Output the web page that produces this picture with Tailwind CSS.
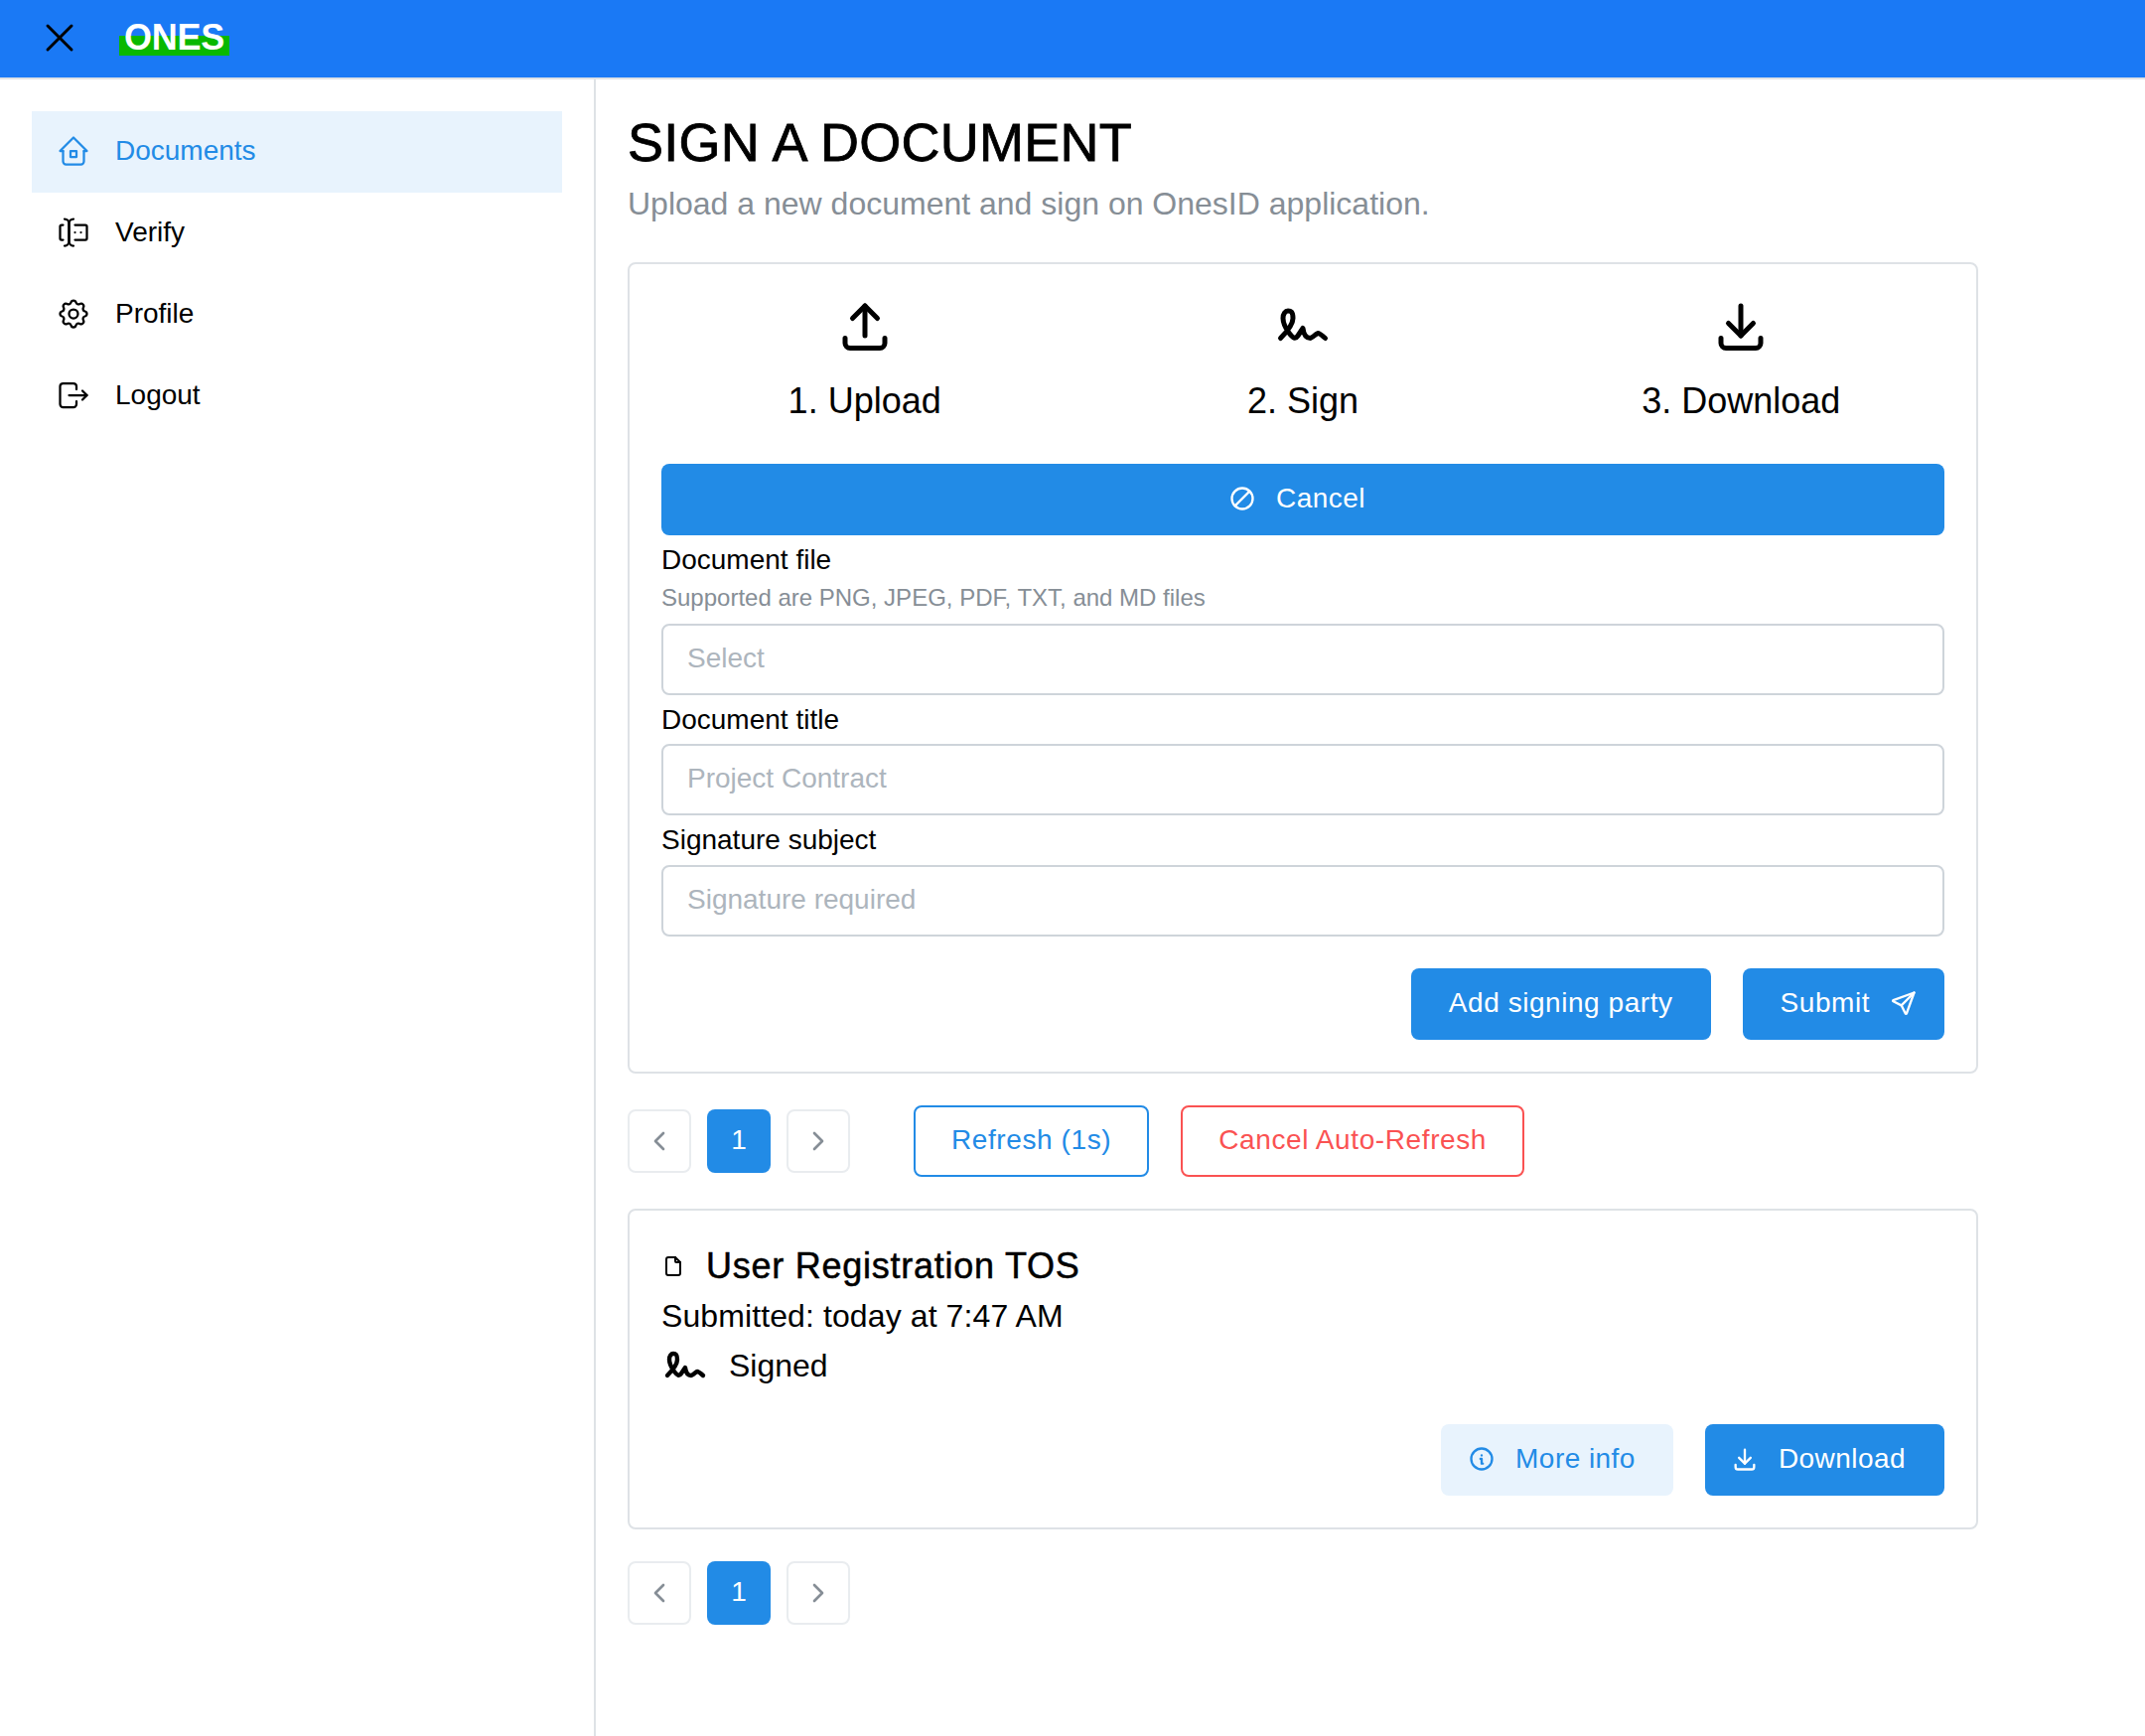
<!DOCTYPE html>
<html lang="en">

<head>
    <meta charset="UTF-8">
    <meta name="viewport" content="width=device-width, initial-scale=1.0">
    <title>Sign a document</title>
    <script src="https://cdn.jsdelivr.net/npm/@tailwindcss/browser@4"></script>
</head>

<body class="bg-white text-black text-[28px] font-['Liberation_Sans',Arial,sans-serif]">

    <!-- header -->
    <header class="h-[80px] bg-[#1a79f5] border-b-2 border-[#dee2e6] flex items-center pl-[36px] pb-[2px]">
        <svg class="w-[48px] h-[48px]" viewBox="0 0 24 24" fill="none" stroke="#000" stroke-width="1.5" stroke-linecap="round" stroke-linejoin="round">
            <path d="M18 6l-12 12" />
            <path d="M6 6l12 12" />
        </svg>
        <div class="relative ml-[36px] w-[111px] h-[52px] flex justify-center">
            <span class="absolute left-0 right-0 top-[24px] h-[20px] bg-[#09b800]"></span>
            <span class="relative text-white font-bold text-[36px] leading-[52px] tracking-[-0.2px]">ONES</span>
        </div>
    </header>

    <div class="flex min-h-[1668px]">

        <!-- sidebar -->
        <nav class="w-[600px] shrink-0 border-r-2 border-[#dee2e6] pt-[32px] px-[32px]">
            <a href="#" class="h-[82px] flex items-center gap-[24px] pl-[24px] pb-[2px] bg-[#e8f3fd] text-[#228be6]">
                <svg class="w-[36px] h-[36px]" viewBox="0 0 24 24" fill="none" stroke="currentColor" stroke-width="1.5" stroke-linecap="round" stroke-linejoin="round">
                    <path d="M5 12l-2 0l9 -9l9 9l-2 0" />
                    <path d="M5 12v7a2 2 0 0 0 2 2h10a2 2 0 0 0 2 -2v-7" />
                    <path d="M10 12h4v4h-4z" />
                </svg>
                Documents
            </a>
            <a href="#" class="h-[82px] flex items-center gap-[24px] pl-[24px] pb-[2px]">
                <svg class="w-[36px] h-[36px]" viewBox="0 0 24 24" fill="none" stroke="currentColor" stroke-width="1.5" stroke-linecap="round" stroke-linejoin="round">
                    <path d="M12 3a3 3 0 0 0 -3 3v12a3 3 0 0 0 3 3" />
                    <path d="M6 3a3 3 0 0 1 3 3v12a3 3 0 0 1 -3 3" />
                    <path d="M13 7h7a1 1 0 0 1 1 1v8a1 1 0 0 1 -1 1h-7" />
                    <path d="M5 7h-1a1 1 0 0 0 -1 1v8a1 1 0 0 0 1 1h1" />
                    <path d="M17 12h.01" />
                    <path d="M13 12h.01" />
                </svg>
                Verify
            </a>
            <a href="#" class="h-[82px] flex items-center gap-[24px] pl-[24px] pb-[2px]">
                <svg class="w-[36px] h-[36px]" viewBox="0 0 24 24" fill="none" stroke="currentColor" stroke-width="1.5" stroke-linecap="round" stroke-linejoin="round">
                    <path d="M10.325 4.317c.426 -1.756 2.924 -1.756 3.35 0a1.724 1.724 0 0 0 2.573 1.066c1.543 -.94 3.31 .826 2.37 2.37a1.724 1.724 0 0 0 1.065 2.572c1.756 .426 1.756 2.924 0 3.35a1.724 1.724 0 0 0 -1.066 2.573c.94 1.543 -.826 3.31 -2.37 2.37a1.724 1.724 0 0 0 -2.572 1.065c-.426 1.756 -2.924 1.756 -3.35 0a1.724 1.724 0 0 0 -2.573 -1.066c-1.543 .94 -3.31 -.826 -2.37 -2.37a1.724 1.724 0 0 0 -1.065 -2.572c-1.756 -.426 -1.756 -2.924 0 -3.35a1.724 1.724 0 0 0 1.066 -2.573c-.94 -1.543 .826 -3.31 2.37 -2.37c1 .608 2.296 .07 2.572 -1.065z" />
                    <path d="M9 12a3 3 0 1 0 6 0a3 3 0 0 0 -6 0" />
                </svg>
                Profile
            </a>
            <a href="#" class="h-[82px] flex items-center gap-[24px] pl-[24px] pb-[2px]">
                <svg class="w-[36px] h-[36px]" viewBox="0 0 24 24" fill="none" stroke="currentColor" stroke-width="1.5" stroke-linecap="round" stroke-linejoin="round">
                    <path d="M14 8v-2a2 2 0 0 0 -2 -2h-7a2 2 0 0 0 -2 2v12a2 2 0 0 0 2 2h7a2 2 0 0 0 2 -2v-2" />
                    <path d="M9 12h12l-3 -3" />
                    <path d="M18 15l3 -3" />
                </svg>
                Logout
            </a>
        </nav>

        <!-- main -->
        <main class="w-[1392px] pl-[32px] pt-[34px]">
            <h1 class="text-[54px] leading-[58px] tracking-[0.27px] [-webkit-text-stroke:0.8px_black]">SIGN A DOCUMENT</h1>
            <p class="text-[#868e96] text-[32px] leading-[38px] mt-[14px]">Upload a new document and sign on OnesID application.</p>

            <!-- sign form -->
            <section class="mt-[40px] border-2 border-[#dee2e6] rounded-[8px] px-[32px] pt-[32px] pb-[32px] h-[817px]">
                <div class="grid grid-cols-3 -mx-[16px] text-center text-[36px] leading-[44px]">
                    <div class="flex flex-col items-center gap-[24px]">
                        <svg class="w-[60px] h-[60px]" viewBox="0 0 24 24" fill="none" stroke="#000" stroke-width="2" stroke-linecap="round" stroke-linejoin="round">
                            <path d="M4 17v2a2 2 0 0 0 2 2h12a2 2 0 0 0 2 -2v-2" />
                            <path d="M7 9l5 -5l5 5" />
                            <path d="M12 4l0 12" />
                        </svg>
                        1. Upload
                    </div>
                    <div class="flex flex-col items-center gap-[24px]">
                        <svg class="w-[60px] h-[60px]" viewBox="0 0 24 24" fill="none" stroke="#000" stroke-width="2" stroke-linecap="round" stroke-linejoin="round">
                            <path d="M3 17c3.333 -3.333 5 -6 5 -8c0 -3 -1 -3 -2 -3s-2.032 1.085 -2 3c.034 2.048 1.658 4.877 2.5 6c1.5 2 2.5 2.5 3.5 1l2 -3c.333 2.667 1.333 4 3 4c.53 0 2.639 -2 3 -2c.517 0 1.517 .667 3 2" />
                        </svg>
                        2. Sign
                    </div>
                    <div class="flex flex-col items-center gap-[24px]">
                        <svg class="w-[60px] h-[60px]" viewBox="0 0 24 24" fill="none" stroke="#000" stroke-width="2" stroke-linecap="round" stroke-linejoin="round">
                            <path d="M4 17v2a2 2 0 0 0 2 2h12a2 2 0 0 0 2 -2v-2" />
                            <path d="M7 11l5 5l5 -5" />
                            <path d="M12 4l0 12" />
                        </svg>
                        3. Download
                    </div>
                </div>

                <button class="mt-[41px] w-full h-[72px] pb-[2px] rounded-[8px] bg-[#228be6] text-white tracking-[0.5px] flex items-center justify-center gap-[20px] pr-[12px]">
                    <svg class="w-[28px] h-[28px]" viewBox="0 0 24 24" fill="none" stroke="currentColor" stroke-width="2" stroke-linecap="round" stroke-linejoin="round">
                        <path d="M3 12a9 9 0 1 0 18 0a9 9 0 1 0 -18 0" />
                        <path d="M5.7 18.3l12.6 -12.6" />
                    </svg>
                    Cancel
                </button>

                <label class="block leading-[48px] mt-[1px]">Document file</label>
                <p class="text-[#868e96] text-[24px] leading-[28px] mb-[12px]">Supported are PNG, JPEG, PDF, TXT, and MD files</p>
                <input class="block w-full h-[72px] pb-[2px] border-2 border-[#ced4da] rounded-[8px] px-[24px] placeholder:text-[#adb5bd]" placeholder="Select">

                <label class="block leading-[49px]">Document title</label>
                <input class="block w-full h-[72px] pb-[2px] border-2 border-[#ced4da] rounded-[8px] px-[24px] placeholder:text-[#adb5bd]" placeholder="Project Contract">

                <label class="block leading-[50px]">Signature subject</label>
                <input class="block w-full h-[72px] pb-[2px] border-2 border-[#ced4da] rounded-[8px] px-[24px] placeholder:text-[#adb5bd]" placeholder="Signature required">

                <div class="flex justify-end gap-[32px] mt-[32px] tracking-[0.55px]">
                    <button class="h-[72px] pb-[2px] px-[38px] rounded-[8px] bg-[#228be6] text-white">Add signing party</button>
                    <button class="h-[72px] pb-[2px] pl-[38px] pr-[27px] rounded-[8px] bg-[#228be6] text-white flex items-center gap-[20px]">
                        Submit
                        <svg class="w-[28px] h-[28px]" viewBox="0 0 24 24" fill="none" stroke="currentColor" stroke-width="2" stroke-linecap="round" stroke-linejoin="round">
                            <path d="M10 14l11 -11" />
                            <path d="M21 3l-6.5 18a.55 .55 0 0 1 -1 0l-3.5 -7l-7 -3.5a.55 .55 0 0 1 0 -1l18 -6.5" />
                        </svg>
                    </button>
                </div>
            </section>

            <!-- pager and refresh -->
            <div class="mt-[32px] flex items-center gap-[64px]">
                <div class="flex gap-[16px]">
                    <button class="w-[64px] h-[64px] border-2 border-[#e9ecef] rounded-[8px] flex items-center justify-center">
                        <svg class="w-[32px] h-[32px]" viewBox="0 0 24 24" fill="none" stroke="#868e96" stroke-width="2" stroke-linecap="round" stroke-linejoin="round">
                            <path d="M15 6l-6 6l6 6" />
                        </svg>
                    </button>
                    <button class="w-[64px] h-[64px] pb-[2px] rounded-[8px] bg-[#228be6] text-white">1</button>
                    <button class="w-[64px] h-[64px] border-2 border-[#e9ecef] rounded-[8px] flex items-center justify-center">
                        <svg class="w-[32px] h-[32px]" viewBox="0 0 24 24" fill="none" stroke="#868e96" stroke-width="2" stroke-linecap="round" stroke-linejoin="round">
                            <path d="M9 6l6 6l-6 6" />
                        </svg>
                    </button>
                </div>
                <div class="flex gap-[32px] tracking-[0.6px]">
                    <button class="h-[72px] pb-[2px] px-[36px] border-2 border-[#228be6] rounded-[8px] text-[#228be6]">Refresh (1s)</button>
                    <button class="h-[72px] pb-[2px] px-[36px] border-2 border-[#fa5252] rounded-[8px] text-[#fa5252]">Cancel Auto-Refresh</button>
                </div>
            </div>

            <!-- document card -->
            <section class="mt-[32px] border-2 border-[#dee2e6] rounded-[8px] px-[32px] pt-[34px] h-[323px]">
                <div class="flex items-center gap-[21px] h-[44px] text-[36px] tracking-[0.75px] [-webkit-text-stroke:0.5px_black]">
                    <svg class="w-[24px] h-[24px]" viewBox="0 0 24 24" fill="none" stroke="#000" stroke-width="2" stroke-linecap="round" stroke-linejoin="round">
                        <path d="M14 3v4a1 1 0 0 0 1 1h4" />
                        <path d="M17 21h-10a2 2 0 0 1 -2 -2v-14a2 2 0 0 1 2 -2h7l5 5v11a2 2 0 0 1 -2 2z" />
                    </svg>
                    User Registration TOS
                </div>
                <p class="text-[32px] leading-[40px] mt-[8px] tracking-[0.1px]">Submitted: today at 7:47 AM</p>
                <div class="flex items-center gap-[20px] text-[32px] h-[44px] mt-[8px]">
                    <svg class="w-[48px] h-[48px]" viewBox="0 0 24 24" fill="none" stroke="#000" stroke-width="2.2" stroke-linecap="round" stroke-linejoin="round">
                        <path d="M3 17c3.333 -3.333 5 -6 5 -8c0 -3 -1 -3 -2 -3s-2.032 1.085 -2 3c.034 2.048 1.658 4.877 2.5 6c1.5 2 2.5 2.5 3.5 1l2 -3c.333 2.667 1.333 4 3 4c.53 0 2.639 -2 3 -2c.517 0 1.517 .667 3 2" />
                    </svg>
                    Signed
                </div>
                <div class="flex justify-end gap-[32px] mt-[37px] tracking-[0.45px]">
                    <button class="h-[72px] pb-[2px] pl-[27px] pr-[38px] rounded-[8px] bg-[#e8f3fd] text-[#228be6] flex items-center gap-[20px]">
                        <svg class="w-[28px] h-[28px]" viewBox="0 0 24 24" fill="none" stroke="currentColor" stroke-width="2" stroke-linecap="round" stroke-linejoin="round">
                            <path d="M3 12a9 9 0 1 0 18 0a9 9 0 0 0 -18 0" />
                            <path d="M12 9h.01" />
                            <path d="M11 12h1v4h1" />
                        </svg>
                        More info
                    </button>
                    <button class="h-[72px] pb-[2px] pl-[26px] pr-[39px] rounded-[8px] bg-[#228be6] text-white flex items-center gap-[20px]">
                        <svg class="w-[28px] h-[28px]" viewBox="0 0 24 24" fill="none" stroke="currentColor" stroke-width="2" stroke-linecap="round" stroke-linejoin="round">
                            <path d="M4 17v2a2 2 0 0 0 2 2h12a2 2 0 0 0 2 -2v-2" />
                            <path d="M7 11l5 5l5 -5" />
                            <path d="M12 4l0 12" />
                        </svg>
                        Download
                    </button>
                </div>
            </section>

            <!-- bottom pager -->
            <div class="mt-[32px] flex gap-[16px]">
                <button class="w-[64px] h-[64px] border-2 border-[#e9ecef] rounded-[8px] flex items-center justify-center">
                    <svg class="w-[32px] h-[32px]" viewBox="0 0 24 24" fill="none" stroke="#868e96" stroke-width="2" stroke-linecap="round" stroke-linejoin="round">
                        <path d="M15 6l-6 6l6 6" />
                    </svg>
                </button>
                <button class="w-[64px] h-[64px] pb-[2px] rounded-[8px] bg-[#228be6] text-white">1</button>
                <button class="w-[64px] h-[64px] border-2 border-[#e9ecef] rounded-[8px] flex items-center justify-center">
                    <svg class="w-[32px] h-[32px]" viewBox="0 0 24 24" fill="none" stroke="#868e96" stroke-width="2" stroke-linecap="round" stroke-linejoin="round">
                        <path d="M9 6l6 6l-6 6" />
                    </svg>
                </button>
            </div>
        </main>
    </div>

</body>

</html>
